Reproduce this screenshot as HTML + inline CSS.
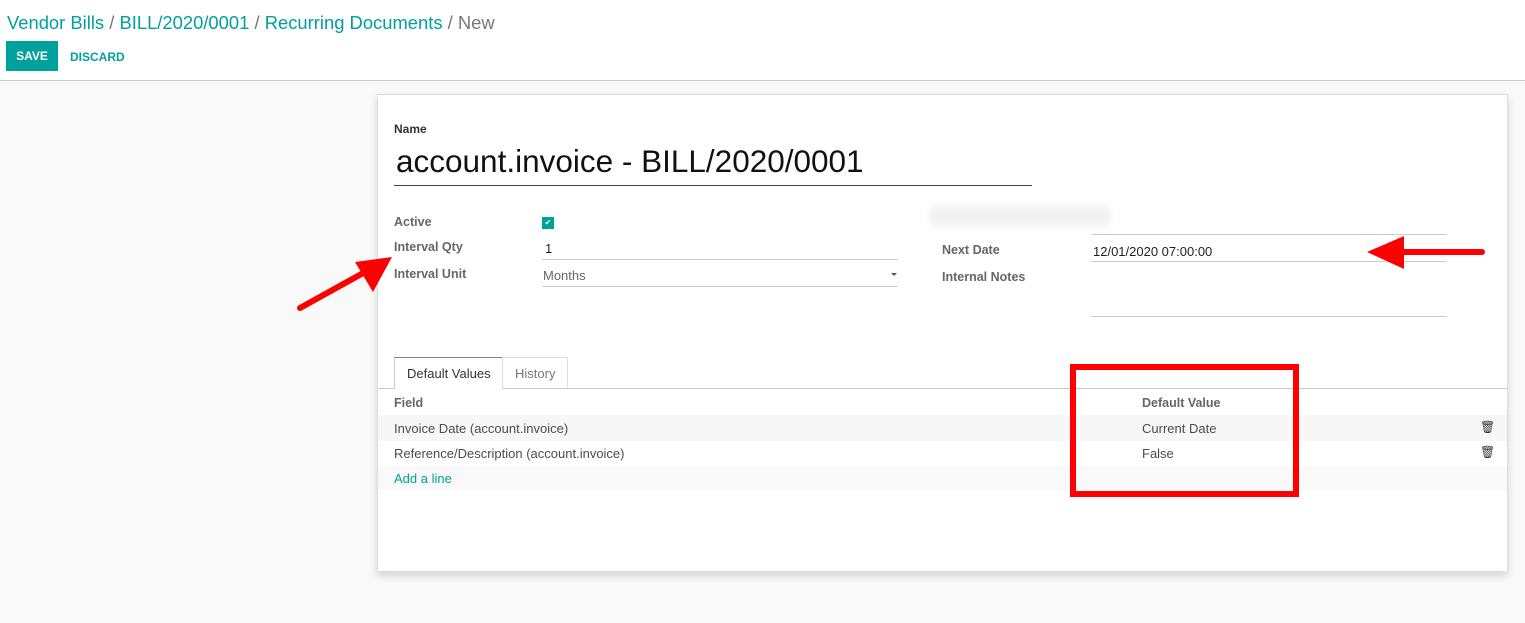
<!DOCTYPE html>
<html><head><style>
*{margin:0;padding:0;box-sizing:border-box}
body{width:1525px;height:623px;background:#f9f9f9;font-family:"Liberation Sans",sans-serif;position:relative;overflow:hidden;color:#4c4c4c}
.top{position:absolute;left:0;top:0;width:1525px;height:81px;background:#fff;border-bottom:1px solid #ccc}
.bc{position:absolute;left:7px;top:12px;font-size:18.4px;color:#00a09d}
.bc .s{color:#777}
.save{position:absolute;left:6px;top:41px;width:52px;height:30px;background:#00a09d;color:#fff;font-size:12px;font-weight:bold;text-align:center;line-height:30px}
.disc{position:absolute;left:70px;top:50px;font-size:12px;font-weight:bold;color:#00a09d}
.sheet{position:absolute;left:377px;top:94px;width:1131px;height:478px;background:#fff;border:1px solid #ddd;box-shadow:0 4px 8px rgba(0,0,0,.15)}
.a{position:absolute;font-size:13px;white-space:nowrap}
.lb{font-weight:bold;color:#666;font-size:12.5px}
.ln{position:absolute;height:1px;background:#ccc}
</style></head><body>
<div class="top">
<div class="bc">Vendor Bills <span class="s">/</span> BILL/2020/0001 <span class="s">/</span> Recurring Documents <span class="s">/ New</span></div>
<div class="save">SAVE</div><div class="disc">DISCARD</div>
</div>
<div class="sheet"></div>
<div class="a lb" style="left:394px;top:122px;font-size:12px;color:#333">Name</div>
<div class="a" style="left:396px;top:143px;font-size:31.5px;color:#111">account.invoice - BILL/2020/0001</div>
<div class="ln" style="left:394px;top:185px;width:638px;background:#444"></div>
<div class="a lb" style="left:394px;top:215px">Active</div>
<div style="position:absolute;left:542px;top:217px;width:12px;height:12px;background:#00a09d;color:#fff;font-size:8px;text-align:center;line-height:12px">✔</div>
<div class="a lb" style="left:394px;top:240px">Interval Qty</div>
<div class="a" style="left:545px;top:241px;color:#222">1</div>
<div class="ln" style="left:542px;top:259px;width:356px"></div>
<div class="a lb" style="left:394px;top:267px">Interval Unit</div>
<div class="a" style="left:543px;top:268px;color:#666">Months</div>
<div style="position:absolute;left:891px;top:273px;border:3px solid transparent;border-top-color:#555"></div>
<div class="ln" style="left:542px;top:286px;width:356px"></div>
<div style="position:absolute;left:930px;top:205px;width:180px;height:22px;background:#f2f2f2;filter:blur(4px)"></div>
<div class="ln" style="left:1091px;top:234px;width:356px"></div>
<div class="a lb" style="left:942px;top:243px">Next Date</div>
<div class="a" style="left:1093px;top:244px;color:#222">12/01/2020 07:00:00</div>
<div class="ln" style="left:1091px;top:261px;width:356px"></div>
<div class="a lb" style="left:942px;top:270px">Internal Notes</div>
<div class="ln" style="left:1091px;top:316px;width:356px"></div>
<div class="ln" style="left:378px;top:388px;width:1129px"></div>
<div style="position:absolute;left:394px;top:357px;width:109px;height:32px;background:#fff;border:1px solid #ccc;border-top-color:#7c7bad;border-bottom:none"></div>
<div class="a" style="left:407px;top:366px;color:#333">Default Values</div>
<div style="position:absolute;left:502px;top:357px;width:66px;height:31px;border:1px solid #ddd;border-bottom:none"></div>
<div class="a" style="left:515px;top:366px;color:#777">History</div>
<div class="a lb" style="left:394px;top:396px">Field</div>
<div class="a lb" style="left:1142px;top:396px">Default Value</div>
<div style="position:absolute;left:378px;top:415px;width:1129px;height:26px;background:#f7f7f7"></div>
<div style="position:absolute;left:378px;top:466px;width:1129px;height:24px;background:#f9f9f9"></div>
<div class="a" style="left:394px;top:421px">Invoice Date (account.invoice)</div>
<div class="a" style="left:1142px;top:421px">Current Date</div>
<div class="a" style="left:394px;top:446px">Reference/Description (account.invoice)</div>
<div class="a" style="left:1142px;top:446px">False</div>
<div class="a" style="left:394px;top:471px;color:#00a09d">Add a line</div>
<div class="a" style="left:1480px;top:420px;font-size:12px;color:#333">🗑</div>
<div class="a" style="left:1480px;top:445px;font-size:12px;color:#333">🗑</div>
<svg style="position:absolute;left:0;top:0" width="1525" height="623">
<line x1="300" y1="308" x2="365" y2="272" stroke="#f00" stroke-width="6" stroke-linecap="round"/>
<polygon points="392,257 355,262 373,292" fill="#f00"/>
<line x1="1400" y1="252" x2="1482" y2="252" stroke="#f00" stroke-width="6" stroke-linecap="round"/>
<polygon points="1367,252 1404,236 1404,269" fill="#f00"/>
<rect x="1073" y="367" width="223" height="127" fill="none" stroke="#f00" stroke-width="6"/>
</svg>
</body></html>
